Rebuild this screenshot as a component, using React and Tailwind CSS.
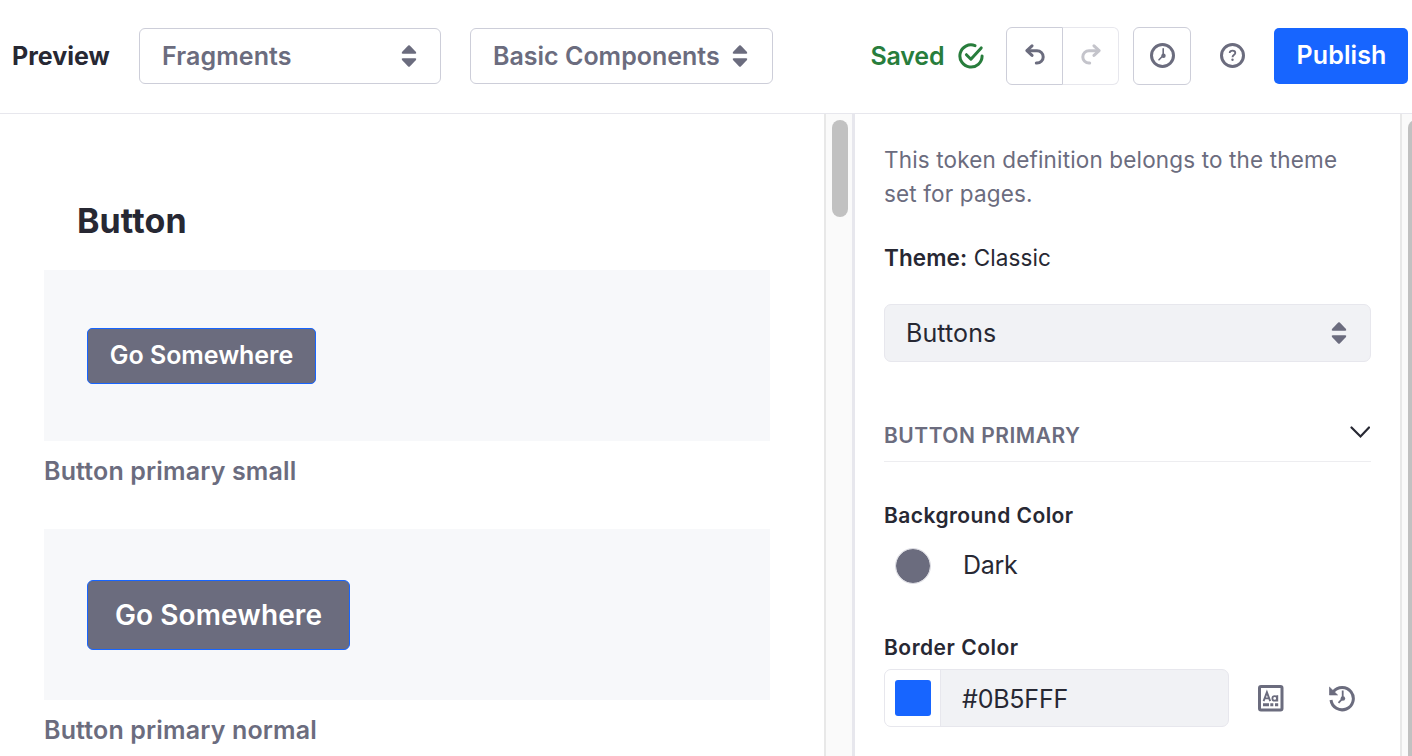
import React from "react";

function SortCaret({ className }) {
  return (
    <svg className={className} width="16" height="24" viewBox="0 0 16 24" fill="#6b6c7e">
      <path d="M7.2 1.6Q8 .8 8.800 1.600L15 7.900Q15.900 9.500 14.300 9.700H1.700Q.100 9.500 1 7.900Z" />
      <path d="M7.200 22.400Q8 23.200 8.800 22.400L15 16.100Q15.900 14.500 14.300 14.300H1.700Q.100 14.500 1 16.100Z" />
    </svg>
  );
}

function ToolbarSelect({ label, className }) {
  return (
    <button className={`flex h-14 shrink-0 items-center justify-between rounded-md border border-[#cdced9] bg-white pl-[22px] text-[25px] font-semibold text-[#6b6c7e] ${className}`}>
      <span className="pt-px">{label}</span>
      <SortCaret />
    </button>
  );
}

function CheckCircle() {
  return (
    <svg width="26" height="26" viewBox="0 0 26 26" fill="none" stroke="#287d3c" strokeWidth="3" strokeLinecap="round" strokeLinejoin="round">
      <path d="M17 2.6A11.100 11.100 0 1 0 24.100 13" />
      <path d="M8.400 11.700L12.900 16.200L23.200 4.900" />
    </svg>
  );
}

function UndoArrow({ className }) {
  return (
    <svg className={className} width="20" height="21" viewBox="0 0 20 21" fill="none" stroke="currentColor" strokeWidth="3" strokeLinecap="round" strokeLinejoin="round">
      <path d="M7 1.800L1.900 6.600L7 11.400" />
      <path d="M2.500 6.700H12A6.200 6.200 0 0 1 12 19.100H11.300" />
    </svg>
  );
}

function Clock() {
  return (
    <svg width="26" height="26" viewBox="0 0 26 26" fill="none" stroke="#6b6c7e" strokeLinecap="round">
      <circle cx="13.500" cy="12.500" r="11" strokeWidth="3" />
      <path d="M14.200 5.700V12.500L10 16.800" strokeWidth="1.600" />
      <circle cx="14.500" cy="12.700" r="2.200" fill="#6b6c7e" stroke="none" />
    </svg>
  );
}

function Help() {
  return (
    <svg width="26" height="26" viewBox="0 0 26 26" fill="none" stroke="#6b6c7e">
      <circle cx="13.500" cy="12.500" r="11" strokeWidth="3" />
      <path d="M10.700 10.100C10.700 8.400 11.800 7.600 13.500 7.600S16.300 8.500 16.300 10C16.300 11.800 13.500 11.900 13.500 14.300" strokeWidth="1.800" />
      <circle cx="13.500" cy="16.700" r="1.200" fill="#6b6c7e" stroke="none" />
    </svg>
  );
}

function TokenIcon() {
  return (
    <svg width="26" height="27" viewBox="0 0 26 27" fill="none" stroke="#6b6c7e">
      <rect x="1.500" y="1.500" width="22.500" height="23.500" rx="1.500" strokeWidth="3" />
      <path d="M5.600 16.200L8.900 7.300L12.200 16.200M6.800 13.400H11" strokeWidth="1.900" />
      <circle cx="16.700" cy="13.400" r="2.300" strokeWidth="1.800" />
      <path d="M19.300 10.200V16.500" strokeWidth="1.800" />
      <path d="M5 19.800H11M12.300 19.800H15.300M17 19.800H20.200" strokeWidth="3" />
    </svg>
  );
}

function HistoryIcon() {
  return (
    <svg width="26" height="27" viewBox="0 0 26 27" fill="none" stroke="#6b6c7e">
      <path d="M4.300 6.700A11.200 11.200 0 1 1 2 15" strokeWidth="3" />
      <path d="M.400 2V10H8.600Z" fill="#6b6c7e" stroke="#6b6c7e" strokeWidth=".6" />
      <path d="M13.700 5.600V13.500L9.500 17.800" strokeWidth="1.800" />
      <circle cx="13.900" cy="13.500" r="2.300" fill="#6b6c7e" stroke="none" />
    </svg>
  );
}

function Header() {
  return (
    <header className="flex h-[114px] shrink-0 items-center border-b border-[#e7e7ed] pb-[1px] pl-3">
      <h1 className="w-[127px] shrink-0 pt-px text-[25px] font-bold text-[#272833]">Preview</h1>
      <ToolbarSelect label="Fragments" className="w-[302px] pr-[23px] tracking-[0.1px]" />
      <ToolbarSelect label="Basic Components" className="ml-[29px] w-[303px] pr-6 tracking-[0px]" />
      <div className="ml-[97.5px] flex w-[135.5px] shrink-0 items-center text-[25px] font-semibold text-[#287d3c]">
        <span className="w-[87.5px] pt-px tracking-[-0.2px]">Saved</span>
        <CheckCircle />
      </div>
      <div className="flex h-[58px] shrink-0">
        <button className="flex w-[57px] items-center justify-center rounded-l-md border border-[#cdced9] pb-[3px] text-[#6b6c7e]">
          <UndoArrow />
        </button>
        <button className="flex w-14 items-center justify-center rounded-r-md border border-l-0 border-[#e7e7ed] pb-[3px] text-[#c4c4cb]">
          <UndoArrow className="-scale-x-100" />
        </button>
      </div>
      <button className="ml-[14px] flex h-[58px] w-[58px] shrink-0 items-center justify-center rounded-md border border-[#cdced9] pb-[1px]">
        <Clock />
      </button>
      <button className="ml-7 flex h-[58px] shrink-0 items-center pb-[1px]">
        <Help />
      </button>
      <button className="ml-[29px] flex h-14 w-[134px] shrink-0 items-center justify-center rounded-[5px] bg-[#1765ff] pl-px text-[25px] font-semibold tracking-[0.1px] text-white">
        Publish
      </button>
    </header>
  );
}

function Preview() {
  return (
    <main className="w-[824px] shrink-0 pl-11 pt-[84px]">
      <h2 className="pl-[33px] text-[34px] leading-[46px] font-bold tracking-[0.1px] text-[#272833]">Button</h2>
      <div className="mt-[26px] flex h-[171px] w-[726px] items-center bg-[#f7f8fa] pl-[43px]">
        <button className="h-14 w-[229px] rounded-[5px] border border-[#1765ff] bg-[#6b6c7e] text-[25px] font-semibold tracking-[-0.05px] text-white">Go Somewhere</button>
      </div>
      <p className="mt-3 h-9 text-[25px] leading-9 font-semibold tracking-[0.15px] text-[#6b6c7e]">Button primary small</p>
      <div className="mt-10 flex h-[171px] w-[726px] items-center bg-[#f7f8fa] pl-[43px]">
        <button className="h-[70px] w-[263px] rounded-md border border-[#1765ff] bg-[#6b6c7e] pt-px text-[28px] font-semibold tracking-[0.1px] text-white">Go Somewhere</button>
      </div>
      <p className="mt-3 h-9 text-[25px] leading-9 font-semibold tracking-[0.15px] text-[#6b6c7e]">Button primary normal</p>
    </main>
  );
}

function TokenPanel() {
  return (
    <aside className="w-[545px] shrink-0 pl-[29px] pt-[29px] text-[#272833]">
      <p className="text-[22.5px] leading-[34px] tracking-[0.15px] whitespace-nowrap text-[#6b6c7e]">
        This token definition belongs to the theme
        <br />
        set for pages.
      </p>
      <p className="mt-[30px] text-[22.5px] leading-[34px] tracking-[0.1px]">
        <span className="font-semibold">Theme:</span> Classic
      </p>
      <button className="mt-[29px] flex h-[58px] w-[487px] items-center justify-between rounded-[7px] border border-[#e7e7ed] bg-[#f1f2f5] pr-[23px] pl-[21px] text-[25px] tracking-[0.1px]">
        <span className="pt-0.5">Buttons</span>
        <SortCaret />
      </button>
      <div className="mt-[58px] flex h-[42px] w-[487px] justify-between border-b border-[#ededf0]">
        <h3 className="text-[21px] leading-[32px] font-semibold tracking-[0.5px] text-[#6b6c7e]">BUTTON PRIMARY</h3>
        <svg className="mt-1.5 mr-px" width="20" height="14" viewBox="0 0 20 14" fill="none" stroke="#272833" strokeWidth="2.2" strokeLinecap="round">
          <path d="M1.500 1.500L10.500 10.500L19 1.500" />
        </svg>
      </div>
      <h4 className="mt-[38px] text-[21px] leading-[32px] font-semibold tracking-[0.45px]">Background Color</h4>
      <div className="mt-[16px] flex h-[35px] items-center pl-[11px]">
        <span className="size-9 rounded-full border border-[#d9d9e0] bg-[#6b6c7e] bg-clip-content" />
        <span className="ml-8 pt-px text-[25px] tracking-[-0.3px]">Dark</span>
      </div>
      <h4 className="mt-[49px] text-[21px] leading-[32px] font-semibold tracking-[0.5px]">Border Color</h4>
      <div className="mt-[5px] flex items-center">
        <div className="flex h-[58px] w-[345px] overflow-hidden rounded-[7px] border border-[#e7e7ed] bg-[#f1f2f5]">
          <div className="flex w-14 items-center justify-center border-r border-[#e7e7ed] bg-white">
            <span className="size-9 rounded-[3px] bg-[#1765ff]" />
          </div>
          <span className="pl-[21px] text-[25px] leading-[58px] tracking-[-0.2px]">#0B5FFF</span>
        </div>
        <span className="ml-[29px]"><TokenIcon /></span>
        <span className="ml-[45px]"><HistoryIcon /></span>
      </div>
    </aside>
  );
}

export default function App() {
  return (
    <div className="flex h-[756px] w-[1412px] flex-col overflow-hidden bg-white font-['Inter','Liberation_Sans',sans-serif]">
      <Header />
      <div className="flex min-h-0 flex-1">
        <Preview />
        <div className="flex w-[31px] shrink-0 justify-center border-r-3 border-l-2 border-r-[#e7e7ed] border-l-[#e8e8e8] bg-[#fafafa] pr-px pl-0.5 pt-1.5">
          <div className="h-[97px] w-4 rounded-full bg-[#c1c1c1]" />
        </div>
        <TokenPanel />
        <div className="w-3 shrink-0 overflow-hidden border-l-2 border-[#e8e8e8] bg-[#fafafa] pt-1.5 pl-1.5">
          <div className="h-[900px] w-4 rounded-full bg-[#c1c1c1]" />
        </div>
      </div>
    </div>
  );
}
